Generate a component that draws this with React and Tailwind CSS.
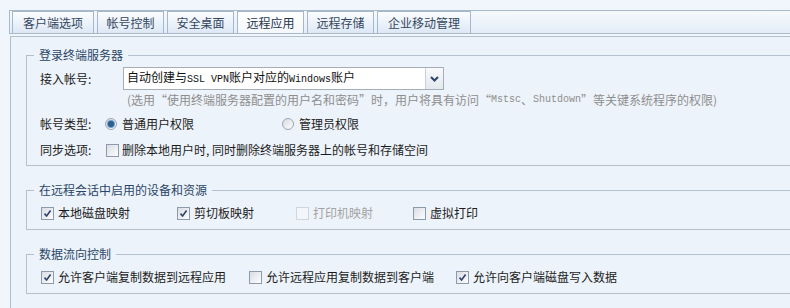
import React from "react";

const F = { fontFamily: '"Noto Sans CJK SC", "Noto Sans", sans-serif' };

function M({ children }) {
  return <span className="text-[10px] font-['Liberation_Mono',monospace]">{children}</span>;
}

function Check({ checked, disabled }) {
  return (
    <span
      className={`w-[13px] h-[13px] shrink-0 border flex items-center justify-center ${
        disabled
          ? "border-[#cdd5de] bg-[#f2f5f9]"
          : "border-[#8d9aac] bg-gradient-to-br from-[#d9dee5] to-[#fdfdfe]"
      }`}
    >
      {checked && (
        <svg width="9" height="9" viewBox="0 0 9 9">
          <path d="M1.5 4.6 L3.6 7 L7.6 1.6" stroke="#34466a" strokeWidth="1.7" fill="none" />
        </svg>
      )}
    </span>
  );
}

function Radio({ checked }) {
  return (
    <span className="w-[12px] h-[12px] shrink-0 rounded-full border border-[#9aa6b6] bg-gradient-to-br from-[#d7dce3] to-[#fdfdfe] flex items-center justify-center">
      {checked && <span className="w-[6px] h-[6px] rounded-full bg-[#2a5f8f] shadow-[0_0_0_1px_#6f9cc4]" />}
    </span>
  );
}

function Group({ title, className, children }) {
  return (
    <div className={`relative border border-[#b4c0cd] ${className}`}>
      <div className="absolute -top-[9px] left-[7px] px-[5px] bg-[#edf3fa] text-[12px] leading-[16px] text-[#2a4668]">
        {title}
      </div>
      {children}
    </div>
  );
}

const tabs = [
  ["客户端选项", "w-[82px]"],
  ["帐号控制", "w-[67px]"],
  ["安全桌面", "w-[67px]"],
  ["远程应用", "w-[67px]"],
  ["远程存储", "w-[67px]"],
  ["企业移动管理", "w-[94px]"],
];

export default function App() {
  return (
    <div style={F} className="w-[790px] h-[308px] overflow-hidden bg-[#f1f6fc] pt-[10px] text-[12px] text-[#1c1c1c]">
      {/* tab strip */}
      <div className="ml-[9px] h-[24px] border-t border-b border-l border-[#a9b9cc] bg-gradient-to-b from-[#f5f9fd] to-[#e3edf8] flex items-end gap-[3px] pl-[2px]">
        {tabs.map(([t, w], i) => (
          <div
            key={t}
            className={`${w} h-[22px] border border-b-0 border-[#a7b7cb] flex items-center justify-center text-[12px] leading-[16px] ${
              i === 3
                ? "bg-gradient-to-b from-[#ffffff] to-[#f3f7fc] text-[#26364c]"
                : "bg-gradient-to-b from-[#fbfdff] to-[#dde8f5] text-[#34465e]"
            }`}
          >
            {t}
          </div>
        ))}
      </div>

      {/* panel */}
      <div className="mt-[2px] ml-[10px] w-[820px] h-[300px] border-t border-l border-[#b2bfcd] bg-[#edf3fa] pt-[18px] pl-[15px]">
        <Group title="登录终端服务器" className="w-[800px] pt-[11px] pl-[13px] pb-[3px]">
          <div className="flex items-center h-[23px]">
            <span className="w-[83px]">接入帐号:</span>
            <div className="w-[321px] h-[23px] border border-[#a6adb7] bg-white flex items-center">
              <span className="flex-1 pl-[3px] leading-[16px] text-[#111]">
                自动创建与<M>SSL VPN</M>账户对应的<M>Windows</M>账户
              </span>
              <span className="w-[18px] h-[21px] border-l border-[#c9d0d9] bg-gradient-to-b from-[#f8fafc] to-[#e4e9ef] flex items-center justify-center">
                <svg width="9" height="6" viewBox="0 0 9 6">
                  <path d="M1 1 L4.5 4.5 L8 1" stroke="#2f4466" strokeWidth="2" fill="none" />
                </svg>
              </span>
            </div>
          </div>
          <div className="h-[20px] flex items-center pl-[87px] text-[#8e8e8e] leading-[16px]">
            (选用“使用终端服务器配置的用户名和密码”时，用户将具有访问“<M>Mstsc</M>、<M>Shutdown</M>”等关键系统程序的权限)
          </div>
          <div className="h-[28px] flex items-center">
            <span className="w-[65px]">帐号类型:</span>
            <div className="w-[177px] flex items-center gap-[5px]">
              <Radio checked />
              <span>普通用户权限</span>
            </div>
            <div className="flex items-center gap-[5px]">
              <Radio />
              <span>管理员权限</span>
            </div>
          </div>
          <div className="h-[24px] flex items-center">
            <span className="w-[66px]">同步选项:</span>
            <Check />
            <span className="ml-[3px]">删除本地用户时, 同时删除终端服务器上的帐号和存储空间</span>
          </div>
        </Group>

        <Group title="在远程会话中启用的设备和资源" className="w-[800px] mt-[24px] pt-[12px] pb-[6px] pl-[14px]">
          <div className="h-[20px] flex items-center">
            <div className="w-[136px] flex items-center gap-[4px]">
              <Check checked />
              <span>本地磁盘映射</span>
            </div>
            <div className="w-[119px] flex items-center gap-[4px]">
              <Check checked />
              <span>剪切板映射</span>
            </div>
            <div className="w-[117px] flex items-center gap-[4px]">
              <Check disabled />
              <span className="text-[#a3a3a3]">打印机映射</span>
            </div>
            <div className="flex items-center gap-[4px]">
              <Check />
              <span>虚拟打印</span>
            </div>
          </div>
        </Group>

        <Group title="数据流向控制" className="w-[800px] mt-[24px] pt-[12px] pb-[6px] pl-[14px]">
          <div className="h-[20px] flex items-center">
            <div className="w-[208px] flex items-center gap-[4px]">
              <Check checked />
              <span>允许客户端复制数据到远程应用</span>
            </div>
            <div className="w-[207px] flex items-center gap-[4px]">
              <Check />
              <span>允许远程应用复制数据到客户端</span>
            </div>
            <div className="flex items-center gap-[4px]">
              <Check checked />
              <span>允许向客户端磁盘写入数据</span>
            </div>
          </div>
        </Group>
      </div>
    </div>
  );
}
